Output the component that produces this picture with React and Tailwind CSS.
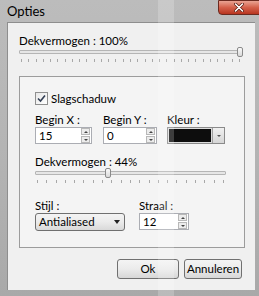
import React from 'react';

const font = { fontFamily: 'Lato, "Noto Sans", sans-serif' };

const Ticks = ({ count }) => (
    <div className="flex justify-between px-[2px]">
        {Array.from({ length: count }).map((_, i) => (
            <div key={i} className="w-px h-[3px] bg-[#a8a8a8]" />
        ))}
    </div>
);

const Slider = ({ thumbLeft, ticks }) => (
    <div className="flex flex-col gap-[2px]">
        <div className="relative h-[10px] flex items-center">
            <div className="w-full h-[4px] border border-[#b5b5b5] bg-[#e6e6e6] rounded-[1px]" />
            <div
                className="absolute top-0 w-[6px] h-[10px] border border-[#8a8a8a] rounded-[2px] bg-gradient-to-b from-[#fafafa] to-[#d9d9d9]"
                style={{ left: thumbLeft }}
            />
        </div>
        <Ticks count={ticks} />
    </div>
);

const SpinBox = ({ value, width }) => (
    <div className={`flex items-center h-[17px] border border-[#abadb3] bg-white ${width}`}>
        <span className="flex-1 pl-[3px] leading-none text-black">{value}</span>
        <div className="flex flex-col gap-px pr-px">
            <div className="w-[9px] h-[7px] border border-[#b8b8b8] bg-[#ececec] flex items-center justify-center">
                <div className="w-0 h-0 border-l-[2px] border-r-[2px] border-b-[2px] border-l-transparent border-r-transparent border-b-[#444]" />
            </div>
            <div className="w-[9px] h-[7px] border border-[#b8b8b8] bg-[#ececec] flex items-center justify-center">
                <div className="w-0 h-0 border-l-[2px] border-r-[2px] border-t-[2px] border-l-transparent border-r-transparent border-t-[#444]" />
            </div>
        </div>
    </div>
);

const Button = ({ children, width }) => (
    <button className={`${width} h-[20px] border border-[#707070] rounded-[3px] bg-gradient-to-b from-[#f4f4f4] via-[#ebebeb] to-[#d7d7d7] leading-none text-black`}>
        {children}
    </button>
);

export default function App() {
    return (
        <div style={font} className="relative w-[259px] h-[296px] overflow-hidden bg-gradient-to-b from-[#bcbcbc] via-[#b4b4b4] to-[#a9a9a9] text-[11.5px] text-black">
            {/* title bar */}
            <div className="h-[22px] flex items-start justify-between">
                <span className="pl-[7px] pt-[4px] text-[13px] leading-[15px] text-black">Opties</span>
                <div className="w-[42px] h-[15px] -mr-[1px] rounded-bl-[4px] border border-[#6b2a20] bg-gradient-to-b from-[#e9a393] via-[#d4604a] to-[#b8341f] flex items-center justify-center">
                    <svg width="10" height="9" viewBox="0 0 10 9">
                        <path d="M1.5 1 L8.5 8 M8.5 1 L1.5 8" stroke="#5a1a10" strokeWidth="3" strokeLinecap="round" />
                        <path d="M1.5 1 L8.5 8 M8.5 1 L1.5 8" stroke="#ffffff" strokeWidth="1.6" strokeLinecap="round" />
                    </svg>
                </div>
            </div>

            {/* client area */}
            <div className="ml-[7px] w-[248px] h-[268px] bg-[#f0f0f0] border-t border-l border-[#8e8e8e] pl-[11px] pr-[12px] pt-[12px]">
                <div className="leading-[12px]">Dekvermogen : 100%</div>
                <div className="w-[223px]">
                    <Slider thumbLeft={218} ticks={31} />
                </div>

                {/* group box */}
                <div className="mt-[14px] w-[226px] h-[172px] border border-[#9c9c9c] bg-[#f4f4f4] px-[15px] pt-[14px]">
                    <div className="flex items-center gap-[3px]">
                        <div className="w-[13px] h-[13px] border border-[#8f8f8f] bg-gradient-to-br from-[#e8e8e8] to-[#ffffff] flex items-center justify-center">
                            <svg width="9" height="9" viewBox="0 0 9 9">
                                <path d="M1 4.5 L3.5 7 L8 1.5" stroke="#333f55" strokeWidth="1.6" fill="none" />
                            </svg>
                        </div>
                        <span className="leading-[15px]">Slagschaduw</span>
                    </div>

                    <div className="mt-[6px] flex gap-[11px]">
                        <div className="flex flex-col">
                            <span className="leading-[15px]">Begin X :</span>
                            <SpinBox value="15" width="w-[57px]" />
                        </div>
                        <div className="flex flex-col">
                            <span className="leading-[15px]">Begin Y :</span>
                            <SpinBox value="0" width="w-[54px]" />
                        </div>
                        <div className="flex flex-col ml-[-1px]">
                            <span className="leading-[15px]">Kleur :</span>
                            <div className="flex w-[58px] h-[17px] border border-[#8a8a8a] bg-[#dcdcdc]">
                                <div className="flex-1 m-px bg-[#0d0d0d]" />
                                <div className="w-[12px] border-l border-[#a0a0a0] bg-gradient-to-b from-[#f0f0f0] to-[#d6d6d6] flex items-center justify-center">
                                    <div className="w-0 h-0 border-l-[2px] border-r-[2px] border-t-[2px] border-l-transparent border-r-transparent border-t-[#555]" />
                                </div>
                            </div>
                        </div>
                    </div>

                    <div className="mt-[12px] leading-[12px]">Dekvermogen : 44%</div>
                    <div className="w-[191px]">
                        <Slider thumbLeft={70} ticks={21} />
                    </div>

                    <div className="mt-[15px] flex gap-[14px]">
                        <div className="flex flex-col">
                            <span className="leading-[15px]">Stijl :</span>
                            <div className="w-[90px] h-[18px] border border-[#707070] rounded-[3px] bg-gradient-to-b from-[#f4f4f4] via-[#ebebeb] to-[#d9d9d9] flex items-center justify-between pl-[3px] pr-[4px]">
                                <span className="leading-none">Antialiased</span>
                                <div className="w-0 h-0 border-l-[3px] border-r-[3px] border-t-[4px] border-l-transparent border-r-transparent border-t-[#222]" />
                            </div>
                        </div>
                        <div className="flex flex-col">
                            <span className="leading-[15px]">Straal :</span>
                            <SpinBox value="12" width="w-[50px]" />
                        </div>
                    </div>
                </div>

                <div className="mt-[11px] flex justify-end gap-[5px] pr-[1px]">
                    <Button width="w-[62px]">Ok</Button>
                    <Button width="w-[58px]">Annuleren</Button>
                </div>
            </div>

            {/* glass reflection stripe */}
            <div className="absolute top-0 left-[158px] w-[16px] h-full bg-white/20 pointer-events-none" />
        </div>
    );
}
